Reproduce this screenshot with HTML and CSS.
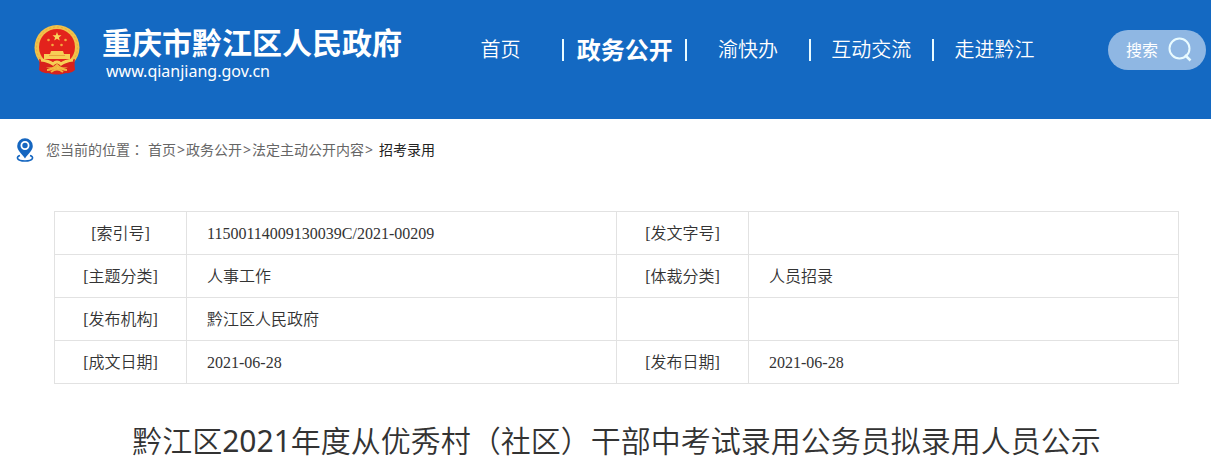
FILE: index.html
```html
<!DOCTYPE html>
<html lang="zh-CN">
<head>
<meta charset="utf-8">
<meta name="viewport" content="width=device-width, initial-scale=1">
<title>重庆市黔江区人民政府</title>
<link rel="stylesheet" href="styles.css">
</head>
<body>
<header class="site-header">
  <a class="brand" href="#">
    <svg class="emblem" viewBox="0 0 46 50" aria-hidden="true">
      <path d="M6 34 L5 45 Q9 49 14 48 Q23 51 32 48 Q37 49 41 45 L40 34 Z" fill="#d8211c"/>
      <circle cx="23" cy="22.500" r="22.500" fill="#f2c14a"/>
      <circle cx="23" cy="22.500" r="20.500" fill="none" stroke="#e6ae3a" stroke-width="1" stroke-dasharray="2 2"/>
      <circle cx="23" cy="22" r="18" fill="#e3231c"/>
      <path d="M23 7 L24.200 10.200 L27.500 10.300 L24.900 12.400 L25.800 15.600 L23 13.700 L20.200 15.600 L21.100 12.400 L18.500 10.300 L21.800 10.200 Z" fill="#f9d65c"/>
      <g fill="#f5a83f"><circle cx="14.500" cy="15" r="1.300"/><circle cx="31.500" cy="15" r="1.300"/><circle cx="18.500" cy="20" r="1.300"/><circle cx="27.500" cy="20" r="1.300"/></g>
      <path d="M17 26 H29 L30 29 H36 V34 H10 V29 H16 Z" fill="#f7cf55"/>
      <path d="M15 30.500 H31" stroke="#e9a53a" stroke-width="1"/>
      <path d="M5 34 Q13 38 23 36 Q33 38 41 34 L40 41 Q31 44 23 41 Q15 44 6 41 Z" fill="#d8211c"/>
      <path d="M7 35 Q15 36 19 39 Q23 35 27 39 Q31 36 39 35" fill="none" stroke="#f7cf55" stroke-width="3"/>
      <path d="M13 45 Q18 45 23 40 Q28 45 33 45 M17 47 Q23 42 29 47" fill="none" stroke="#f2b63f" stroke-width="2"/>
    </svg>
    <span class="brand-text">
      <strong class="brand-name">重庆市黔江区人民政府</strong>
      <span class="brand-url">www.qianjiang.gov.cn</span>
    </span>
  </a>
  <nav class="main-nav" aria-label="主导航">
    <ul class="nav-list">
      <li class="nav-item"><a class="nav-link" href="#">首页</a></li>
      <li class="nav-item"><a class="nav-link nav-link-active" href="#">政务公开</a></li>
      <li class="nav-item"><a class="nav-link" href="#">渝快办</a></li>
      <li class="nav-item"><a class="nav-link" href="#">互动交流</a></li>
      <li class="nav-item"><a class="nav-link" href="#">走进黔江</a></li>
    </ul>
  </nav>
  <form class="search" role="search">
    <input class="search-input" type="text" placeholder="搜索" aria-label="搜索">
    <button class="search-button" type="button" aria-label="提交搜索">
      <svg class="search-icon" viewBox="0 0 24 26" fill="none" stroke="#e9fbff" stroke-width="2" aria-hidden="true"><circle cx="11.500" cy="11.500" r="10"/><path d="M17 18 L22.500 23.500" stroke-width="2.500"/></svg>
    </button>
  </form>
</header>
<main class="content">
  <nav class="breadcrumb" aria-label="当前位置">
    <svg class="pin" viewBox="0 0 18 24" aria-hidden="true">
      <path d="M4 17.500 C0 18.500 0 23 9 23 C18 23 18 18.500 14 17.500" fill="none" stroke="#1566c0" stroke-width="1.600"/>
      <path d="M9 20.500 C6 16 1.200 12.500 1.200 8 A7.800 7.800 0 0 1 16.800 8 C16.800 12.500 12 16 9 20.500 Z" fill="#1566c0"/>
      <circle cx="9" cy="7.500" r="3.600" fill="#1566c0" stroke="#fff" stroke-width="1.800"/>
    </svg>
    <span class="crumb-label">您当前的位置<span class="centered-mark" lang="zh-TW">：</span></span>
    <a class="crumb" href="#">首页</a><span class="crumb-sep">&gt;</span><a class="crumb" href="#">政务公开</a><span class="crumb-sep">&gt;</span><a class="crumb" href="#">法定主动公开内容</a><span class="crumb-sep">&gt;</span>
    <span class="crumb-current">招考录用</span>
  </nav>
  <table class="meta">
    <colgroup><col class="col-label"><col><col class="col-label"><col></colgroup>
    <tbody>
      <tr><th scope="row">[索引号]</th><td>11500114009130039C/2021-00209</td><th scope="row">[发文字号]</th><td></td></tr>
      <tr><th scope="row">[主题分类]</th><td>人事工作</td><th scope="row">[体裁分类]</th><td>人员招录</td></tr>
      <tr><th scope="row">[发布机构]</th><td>黔江区人民政府</td><td></td><td></td></tr>
      <tr><th scope="row">[成文日期]</th><td>2021-06-28</td><th scope="row">[发布日期]</th><td>2021-06-28</td></tr>
    </tbody>
  </table>
  <h1 class="title">黔江区<span class="title-year">2021</span>年度从优秀村（社区）干部中考试录用公务员拟录用人员公示</h1>
</main>
</body>
</html>
```
FILE: styles.css
```css
* {
  box-sizing: border-box;
}

body {
  margin: 0;
  background: #fff;
  color: #333;
  font: 14px/20px "Noto Sans", "Noto Sans CJK SC", sans-serif;
}

a {
  color: inherit;
  text-decoration: none;
}

.centered-mark {
  font-family: "Noto Sans CJK TC", sans-serif;
  line-height: 1;
}

.site-header {
  display: flex;
  align-items: center;
  padding: 0 5px 19px 34px;
  background: #1469c2;
  color: #fff;
}

.brand {
  display: flex;
  align-items: flex-start;
  gap: 22px;
  flex: none;
  width: 405px;
  height: 100px;
  padding-top: 25px;
}

.emblem {
  width: 46px;
  height: 50px;
}

.brand-text {
  display: flex;
  flex-direction: column;
}

.brand-name {
  font-size: 30px;
  line-height: 36px;
}

.brand-url {
  padding-left: 4px;
  font-size: 16px;
  line-height: 20px;
}

.main-nav {
  flex: 1;
}

.nav-list {
  display: flex;
  margin: 0;
  padding: 0;
  list-style: none;
}

.nav-item {
  display: flex;
  flex: 1;
  align-items: center;
}

.nav-item + .nav-item::before {
  content: "";
  width: 2px;
  height: 22px;
  background: #e9fbff;
}

.nav-link {
  flex: 1;
  font-size: 20px;
  font-weight: 350;
  line-height: 32px;
  text-align: center;
  white-space: nowrap;
}

.nav-link-active {
  font-size: 24px;
  font-weight: 700;
}

.search {
  display: flex;
  align-items: center;
  flex: none;
  width: 98px;
  height: 40px;
  margin-left: 53px;
  padding: 0 14px 0 18px;
  border-radius: 20px;
  background: #8fb7e3;
}

.search-input {
  flex: 1;
  min-width: 0;
  padding: 0;
  border: 0;
  outline: 0;
  background: none;
  color: #fff;
  font: 16px/24px "Noto Sans", "Noto Sans CJK SC", sans-serif;
}

.search-input::placeholder {
  color: #fff;
  opacity: 1;
}

.search-button {
  display: flex;
  padding: 0;
  border: 0;
  background: none;
  cursor: pointer;
}

.search-icon {
  width: 24px;
  height: 26px;
}

.breadcrumb {
  display: flex;
  align-items: center;
  padding: 19px 16px;
  color: #666;
}

.pin {
  width: 18px;
  height: 24px;
  margin-right: 12px;
}

.crumb-label {
  margin-right: 4px;
}

.crumb-sep {
  padding: 0 1px;
}

.crumb-current {
  margin-left: 5px;
  color: #222;
}

.meta {
  width: calc(100% - 86px);
  margin: 30px 32px 0 54px;
  border-collapse: collapse;
  table-layout: fixed;
  font: 16px/24px "Liberation Serif", "Noto Sans CJK SC", serif;
}

.meta th,
.meta td {
  height: 43px;
  padding: 2px 0 0;
  border: 1px solid #e2e2e2;
  font-weight: 350;
}

.meta td {
  padding: 2px 20px 0;
}

.col-label {
  width: 132px;
}

.title {
  margin: 36px 32px 12px 54px;
  font-size: 30px;
  font-weight: 350;
  line-height: 42px;
  text-align: center;
}

.title-year {
  font-weight: 400;
}
```
